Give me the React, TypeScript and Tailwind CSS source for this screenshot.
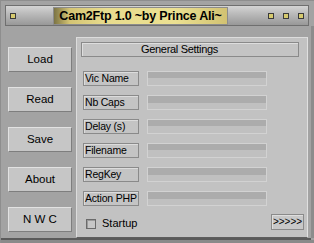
import React from 'react';

const buttons = ['Load', 'Read', 'Save', 'About', 'N W C'];
const fields = ['Vic Name', 'Nb Caps', 'Delay (s)', 'Filename', 'RegKey', 'Action PHP'];

const Square: React.FC = () => (
  <div className="w-[6px] h-[6px] bg-[#d6ca6e] border border-[#3a3a3a]"></div>
);

const App: React.FC = () => {
  return (
    <div
      className="w-[314px] h-[243px] bg-[#a3a3a3] border-t border-l border-[#8e8e8e] flex flex-col text-black"
      style={{ fontFamily: '"Liberation Sans", Arial, sans-serif' }}
    >
      {/* Title bar */}
      <div className="ml-[4px] mt-[4px] w-[304px] h-[21px] border border-[#6f6f6f] bg-[linear-gradient(#d4d4d4,#b8b8b8_45%,#989898)] flex items-end">
        <div className="self-center ml-[4px]">
          <Square />
        </div>
        <div className="ml-[37px] w-[175px] h-[18px] border border-[#8c8c8c] bg-[linear-gradient(90deg,#7c7444,#d4c474_9%,#e8dc8e_30%,#ebe092_70%,#d2c272)] flex items-center justify-center text-[12.5px] font-bold leading-none whitespace-nowrap tracking-[-0.2px]">
          Cam2Ftp 1.0 ~by Prince Ali~
        </div>
        <div className="flex-1"></div>
        <div className="self-center flex gap-[9px] mr-[4px]">
          <Square />
          <Square />
          <Square />
        </div>
      </div>

      {/* Body */}
      <div className="flex h-[212px] border-r-[3px] border-r-[#8c8c8c]">
        <div className="w-[75px] pt-[21px] flex flex-col gap-[15px]">
          {buttons.map((b) => (
            <div
              key={b}
              className="ml-[7px] w-[64px] h-[25px] bg-[#c6c6c6] border border-t-[#e2e2e2] border-l-[#e2e2e2] border-b-[#7e7e7e] border-r-[#7e7e7e] flex items-center justify-center text-[11.5px] leading-none"
            >
              {b}
            </div>
          ))}
        </div>

        <div className="mt-[11px] w-[232px] h-[201px] bg-[#c2c2c2] border border-t-[#dcdcdc] border-l-[#dcdcdc] border-r-[#e0e0e0] border-b-[#5e5e5e] flex flex-col">
          <div className="ml-[4px] mt-[4px] w-[218px] h-[15px] border border-[#8a8a8a] shadow-[inset_1px_1px_0_#dedede] bg-[#c4c4c4] flex items-center justify-center pr-[21px] text-[11px] tracking-[-0.3px] leading-none">
            General Settings
          </div>

          <div className="mt-[14px] flex flex-col gap-[9px]">
            {fields.map((f) => (
              <div key={f} className="flex items-center ml-[6px] gap-[8px]">
                <div className="w-[56px] h-[15px] border border-[#8a8a8a] shadow-[inset_1px_1px_0_#dcdcdc] bg-[#c4c4c4] flex items-center pl-[1px] text-[10.5px] tracking-[-0.2px] leading-none whitespace-nowrap overflow-hidden">
                  {f}
                </div>
                <div className="w-[120px] h-[15px] border border-[#d2d2d2] bg-[linear-gradient(#acacac_50%,#c0c0c0_50%)]"></div>
              </div>
            ))}
          </div>

          <div className="mt-auto mb-[7px] flex items-end justify-between">
            <div className="ml-[9px] h-[13px] flex items-center gap-[6px]">
              <div className="w-[10px] h-[10px] border border-[#6a6a6a] bg-[#c6c6c6] shadow-[inset_1px_1px_0_#9a9a9a]"></div>
              <span className="text-[11px] leading-none">Startup</span>
            </div>
            <div className="mr-[3px] w-[33px] h-[16px] border border-[#8a8a8a] shadow-[inset_1px_1px_0_#dedede] bg-[#c8c8c8] flex items-center justify-center text-[10px] leading-none">
              &gt;&gt;&gt;&gt;&gt;
            </div>
          </div>
        </div>
      </div>

      <div className="h-[2px] bg-[#5a5a5a] mr-[3px]"></div>
      <div className="flex-1 bg-[#8a8a8a]"></div>
    </div>
  );
};

export default App;
